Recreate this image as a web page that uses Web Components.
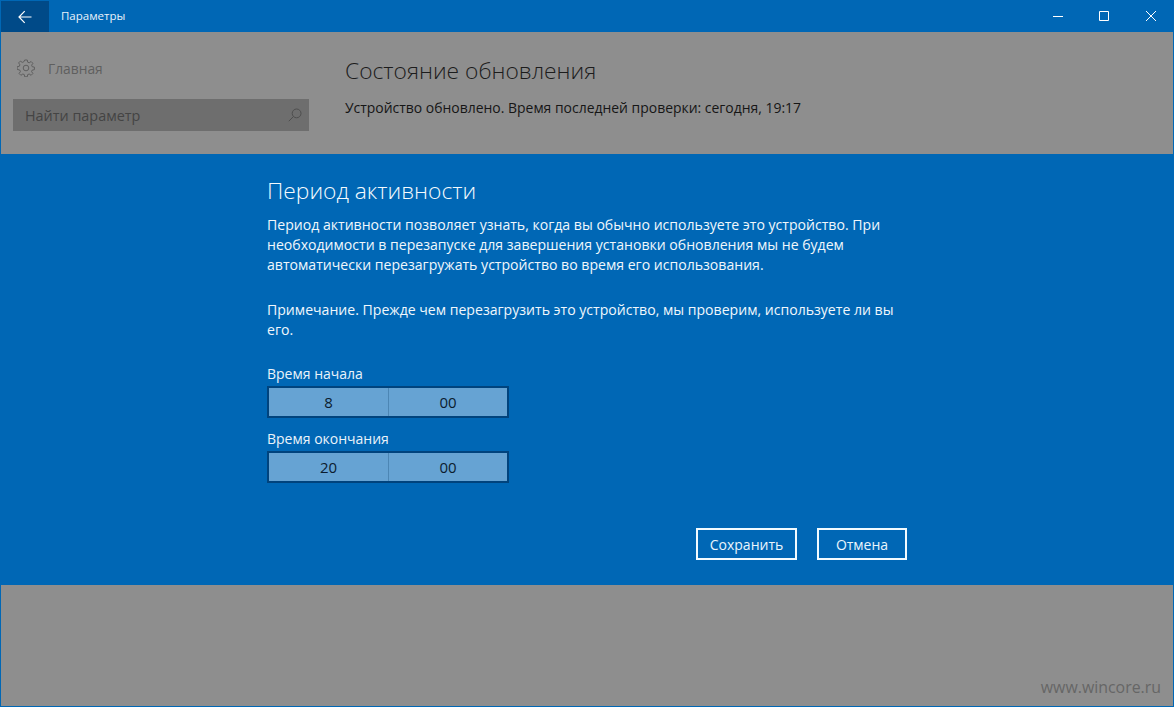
<!DOCTYPE html>
<html lang="ru">
<head>
<meta charset="utf-8">
<title>Параметры</title>
<style>
  html, body { margin: 0; padding: 0; height: 100%; overflow: hidden; background: #8e8e8e; }
  body { font-family: "Open Sans", "Noto Sans", "Liberation Sans", sans-serif; }
</style>
</head>
<body>
<settings-window>
  <title-bar slot="bar" caption="Параметры"></title-bar>
  <dimmed-page slot="top"></dimmed-page>
  <active-hours-dialog slot="dialog"></active-hours-dialog>
  <page-footer slot="bottom"></page-footer>
</settings-window>

<script>
(function () {
  function define(name, css, html, setup) {
    class Comp extends HTMLElement {
      constructor() {
        super();
        this.attachShadow({ mode: "open" });
        this.shadowRoot.innerHTML = "<style>" + css + "</style>" + html;
      }
      connectedCallback() {
        if (setup) setup.call(this, this.shadowRoot);
      }
    }
    customElements.define(name, Comp);
  }

  define("settings-window", `
    :host { display: flex; flex-direction: column; width: 100%; height: 100vh; box-sizing: border-box;
            border: 1px solid #0067b5; border-top: 0; background: #8e8e8e; }
    ::slotted([slot=bottom]) { flex: 1; }
  `, `<slot name="bar"></slot><slot name="top"></slot><slot name="dialog"></slot><slot name="bottom"></slot>`);

  define("title-bar", `
    :host { display: flex; align-items: stretch; height: 32px; background: #0067b5; color: #fff; margin: 0 -1px; padding-left: 1px; }
    .back { width: 48px; display: flex; align-items: center; justify-content: center; background: #004a88; margin-top: 1px; }
    .cap { font-size: 11.5px; line-height: 32px; margin-left: 12px; flex: 1; color: #e8f2fa; }
    .ctl { width: 46px; display: flex; align-items: center; justify-content: center; }
    .ctl:last-child { width: 47px; }
    svg { display: block; }
  `, `
    <div class="back"><svg width="14" height="14" viewBox="0 0 14 14" fill="none" stroke="#fff" stroke-width="1.2"><path d="M1 7H13.5M6.7 1.2 1 7l5.7 5.8"/></svg></div>
    <div class="cap"></div>
    <div class="ctl"><svg width="10" height="10" viewBox="0 0 10 10" stroke="#fff" stroke-width="1"><path d="M0 5.5H10"/></svg></div>
    <div class="ctl"><svg width="10" height="10" viewBox="0 0 10 10" fill="none" stroke="#fff" stroke-width="1"><path d="M.5.5h9v9h-9z"/></svg></div>
    <div class="ctl"><svg width="10" height="10" viewBox="0 0 10 10" fill="none" stroke="#fff" stroke-width="1"><path d="M0 0 10 10M10 0 0 10"/></svg></div>
  `, function (root) {
    root.querySelector(".cap").textContent = this.getAttribute("caption");
  });

  define("dimmed-page", `
    :host { display: grid; grid-template-columns: 344px 1fr; height: 122px; background: #8e8e8e; color: #3a3a3a; }
    .side { padding: 26px 0 0 12px; }
    .home { display: flex; align-items: center; gap: 13px; height: 20px; padding-left: 4px; color: #5f5f5f; font-size: 13.8px; }
    .search { display: flex; align-items: center; justify-content: space-between; height: 32px; width: 296px; margin-top: 21px;
              box-sizing: border-box; padding: 0 7px 0 12px; background: #6e6e6e; color: #444; font-size: 14.4px; }
    .main { padding: 24px 0 0 0; }
    h1 { margin: 0; font-weight: 300; font-size: 22.8px; line-height: 30px; color: #1c1c1c; }
    p { margin: 12px 0 0; font-size: 13.95px; line-height: 20px; color: #161616; }
    svg { display: block; }
  `, `
    <div class="side">
      <div class="home">
        <svg width="18" height="18" viewBox="0 0 18 18" fill="none" stroke="#5f5f5f" stroke-width="1"><circle cx="9" cy="9" r="2.8"/><path d="M7.7 1h2.6l.4 2.2 1.5.6 1.9-1.3 1.8 1.8-1.3 1.9.6 1.5 2.2.4v2.6l-2.2.4-.6 1.5 1.3 1.9-1.8 1.8-1.9-1.3-1.5.6-.4 2.2H7.7l-.4-2.2-1.5-.6-1.9 1.3-1.8-1.8 1.3-1.9-.6-1.5L.1 10.3V7.7l2.2-.4.6-1.5-1.3-1.9 1.8-1.8 1.9 1.3 1.5-.6z"/></svg>
        <span>Главная</span>
      </div>
      <div class="search">
        <span>Найти параметр</span>
        <svg width="14" height="14" viewBox="0 0 14 14" fill="none" stroke="#4e4e4e" stroke-width="1"><circle cx="8.6" cy="5.4" r="4.4"/><path d="M5.4 8.6.8 13.2"/></svg>
      </div>
    </div>
    <div class="main">
      <h1>Состояние обновления</h1>
      <p>Устройство обновлено. Время последней проверки: сегодня, 19:17</p>
    </div>
  `);

  define("time-picker", `
    :host { display: block; font-size: 14px; }
    .lbl { line-height: 20px; color: #eaf3fa; }
    .box { display: grid; grid-template-columns: 1fr 1fr; width: 242px; height: 32px; box-sizing: border-box; margin-top: 2px;
           background: #66a3d3; border: 2px solid #00437d; color: #0b1c2e; font-size: 15px; }
    .cell { display: flex; align-items: center; justify-content: center; }
    .cell + .cell { border-left: 1px solid #4c86b4; }
  `, `
    <div class="lbl"></div>
    <div class="box"><div class="cell h"></div><div class="cell m"></div></div>
  `, function (root) {
    root.querySelector(".lbl").textContent = this.getAttribute("label");
    root.querySelector(".h").textContent = this.getAttribute("hour");
    root.querySelector(".m").textContent = this.getAttribute("minute");
  });

  define("outline-button", `
    :host { display: block; }
    button { display: block; height: 32px; padding: 0; box-sizing: border-box; border: 2px solid #f2fbff; background: transparent;
             color: #eaf5fc; font: inherit; font-size: 14px; width: var(--w, 90px); }
  `, `<button><slot></slot></button>`);

  define("active-hours-dialog", `
    :host { display: block; height: 431px; box-sizing: border-box; background: #0067b5; color: #f0f7fc; padding: 20px 0 0 266px; }
    .inner { width: 640px; display: flex; flex-direction: column; }
    h2 { margin: 0; font-weight: 300; font-size: 22.8px; line-height: 34px; color: #f4fafe; }
    p { margin: 0; font-size: 14.09px; line-height: 20px; }
    .t1 { margin-top: 7px; }
    .t2 { margin-top: 25px; }
    time-picker.a { margin-top: 24px; }
    time-picker.b { margin-top: 11px; }
    .btns { display: flex; justify-content: flex-end; gap: 20px; margin-top: 45px; }
  `, `
    <div class="inner">
      <h2>Период активности</h2>
      <p class="t1">Период активности позволяет узнать, когда вы обычно используете это устройство. При<br>необходимости в перезапуске для завершения установки обновления мы не будем<br>автоматически перезагружать устройство во время его использования.</p>
      <p class="t2">Примечание. Прежде чем перезагрузить это устройство, мы проверим, используете ли вы<br>его.</p>
      <time-picker class="a" label="Время начала" hour="8" minute="00"></time-picker>
      <time-picker class="b" label="Время окончания" hour="20" minute="00"></time-picker>
      <div class="btns">
        <outline-button style="--w:101px">Сохранить</outline-button>
        <outline-button style="--w:90px">Отмена</outline-button>
      </div>
    </div>
  `);

  define("page-footer", `
    :host { display: flex; align-items: flex-end; justify-content: flex-end; background: #8e8e8e; padding: 0 12px 7px 0;
            color: #666; font-size: 15.9px; line-height: 24px; }
  `, `<span>www.wincore.ru</span>`);
})();
</script>
</body>
</html>
